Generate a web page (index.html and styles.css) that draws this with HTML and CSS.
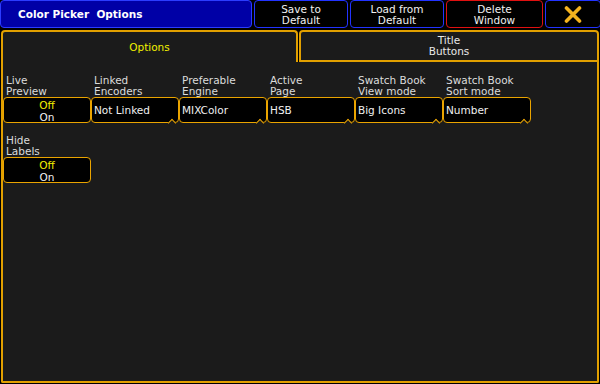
FILE: index.html
```
<!DOCTYPE html>
<html lang="en">
<head>
    <meta charset="UTF-8">
    <title>Color Picker Options</title>
    <link rel="stylesheet" href="styles.css">
</head>
<body>
    <div class="app">
        <header class="topbar">
            <div class="title">Color Picker&nbsp; Options</div>
            <div class="btn">Save to<br>Default</div>
            <div class="btn">Load from<br>Default</div>
            <div class="btn btn-red">Delete<br>Window</div>
            <div class="btn btn-close">
                <svg width="18" height="17" viewBox="0 0 18 17">
                    <path d="M2.5 2 L15.5 15 M15.5 2 L2.5 15" stroke="#f3b21e" stroke-width="3.6" stroke-linecap="round"/>
                </svg>
            </div>
        </header>

        <div class="tabs">
            <div class="tab tab-active">Options</div>
            <div class="tab">Title<br>Buttons</div>
        </div>

        <main class="panel">
            <div class="fields">
                <!-- row 1 -->
                <div class="field">
                    <div class="label">Live<br>Preview</div>
                    <div class="box box-toggle"><span class="on">Off</span><span>On</span></div>
                </div>
                <div class="field">
                    <div class="label">Linked<br>Encoders</div>
                    <div class="box box-select">Not Linked</div>
                </div>
                <div class="field">
                    <div class="label">Preferable<br>Engine</div>
                    <div class="box box-select">MIXColor</div>
                </div>
                <div class="field">
                    <div class="label">Active<br>Page</div>
                    <div class="box box-select">HSB</div>
                </div>
                <div class="field">
                    <div class="label">Swatch Book<br>View mode</div>
                    <div class="box box-select">Big Icons</div>
                </div>
                <div class="field">
                    <div class="label">Swatch Book<br>Sort mode</div>
                    <div class="box box-select">Number</div>
                </div>
                <!-- row 2 -->
                <div class="field">
                    <div class="label">Hide<br>Labels</div>
                    <div class="box box-toggle"><span class="on">Off</span><span>On</span></div>
                </div>
            </div>
        </main>
    </div>
</body>
</html>
```

FILE: styles.css
```
html, body {
    margin: 0;
    width: 600px;
    height: 384px;
    background: #000;
    overflow: hidden;
}
.app {
    width: 600px;
    height: 384px;
    display: flex;
    flex-direction: column;
    font-family: "DejaVu Sans", sans-serif;
    font-size: 10.5px;
    line-height: 11px;
    color: #e8e8e8;
}
.topbar {
    height: 28px;
    display: grid;
    grid-template-columns: 252px 94px 94px 97px 56px;
    column-gap: 2px;
}
.title {
    box-sizing: border-box;
    background: #0000a6;
    border: 1px solid #2b3cff;
    border-radius: 4px;
    color: #fff;
    font-weight: bold;
    font-size: 10.5px;
    padding-left: 17px;
    display: flex;
    align-items: center;
}
.btn {
    box-sizing: border-box;
    background: #000;
    border: 1px solid #2233ff;
    border-radius: 4px;
    color: #f0f0f0;
    text-align: center;
    display: flex;
    align-items: center;
    justify-content: center;
    padding-top: 1px;
}
.btn-red {
    border-color: #e01010;
}
.btn-close svg {
    display: block;
}
.tabs {
    margin-top: 2px;
    height: 32px;
    display: grid;
    grid-template-columns: 297px 300px;
    column-gap: 1px;
    padding-left: 1px;
}
.tab {
    box-sizing: border-box;
    background: #1b1b1b;
    border: 2px solid #e2a000;
    border-radius: 4px 4px 0 0;
    display: flex;
    align-items: center;
    justify-content: center;
    text-align: center;
    color: #e8e8e8;
}
.tab-active {
    border-bottom: none;
    color: #f2f000;
    padding-top: 1px;
}
.panel {
    flex: 1;
    box-sizing: border-box;
    width: 598px;
    margin-left: 1px;
    background: #1b1b1b;
    border: 2px solid #e2a000;
    border-top: none;
    border-radius: 0 0 2px 2px;
    margin-bottom: 1px;
}
.fields {
    display: grid;
    grid-template-columns: repeat(6, 88px);
    row-gap: 12px;
    padding-top: 13px;
}
.label {
    height: 22px;
    padding-left: 3px;
    color: #dcdcdc;
}
.box {
    position: relative;
    box-sizing: border-box;
    height: 26px;
    background: #000;
    border: 1px solid #eaa400;
    border-radius: 4px;
    color: #f0f0f0;
}
.box-select {
    display: flex;
    align-items: center;
    padding-left: 2px;
}
/* little dropdown notch on the bottom edge */
.box-select::after {
    content: "";
    position: absolute;
    right: 3px;
    bottom: -4px;
    width: 5px;
    height: 5px;
    background: #1b1b1b;
    border-top: 1px solid #eaa400;
    border-left: 1px solid #eaa400;
    transform: rotate(45deg);
}
.box-toggle {
    display: flex;
    flex-direction: column;
    align-items: center;
    justify-content: center;
    padding-top: 1px;
    line-height: 12px;
}
.box-toggle .on {
    color: #f4f000;
}
```
